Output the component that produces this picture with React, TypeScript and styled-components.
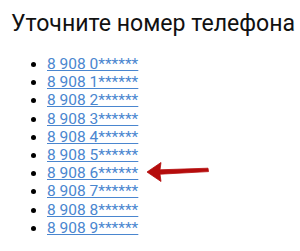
import styled, { createGlobalStyle } from 'styled-components'

const GlobalStyle = createGlobalStyle`
  body {
    margin: 0;
    background: #fff;
    font-family: Roboto, "Noto Sans", sans-serif;
  }
`

const phones = Array.from({ length: 10 }, (_, i) => `8 908 ${i}******`)

const App = () => {
  return (
    <Page>
      <GlobalStyle />
      <Title>Уточните номер телефона</Title>
      <PhoneList>
        {phones.map((p, i) => (
          <PhoneItem key={p}>
            <PhoneLink href="#">{p}</PhoneLink>
            {i === 6 && <Arrow />}
          </PhoneItem>
        ))}
      </PhoneList>
    </Page>
  )
}

// red pointer arrow next to the 7th number
const Arrow = () => (
  <ArrowSvg width="64" height="22" viewBox="0 0 64 22">
    <path
      d="M1 11 L15 1.5 L14 8.8 L62 7.2 L62.5 10.6 L14 13.2 L15 20.5 Z"
      fill="#b50c0c"
      stroke="#b50c0c"
      strokeWidth="0.8"
      strokeLinejoin="round"
    />
  </ArrowSvg>
)

const Page = styled.div`
  padding: 10px 11px;
`

const Title = styled.h1`
  margin: 0 0 17px;
  font-size: 23.1px;
  font-weight: 400;
  color: #111;
  line-height: 28px;
  white-space: nowrap;
`

const PhoneList = styled.ul`
  margin: 0;
  padding-left: 36px;
`

const PhoneItem = styled.li`
  position: relative;
  font-size: 15.5px;
  line-height: 18.2px;
`

const PhoneLink = styled.a`
  color: #4a86cf;
  text-decoration: underline;
`

const ArrowSvg = styled.svg`
  position: absolute;
  left: 99px;
  top: -3px;
`

export default App
